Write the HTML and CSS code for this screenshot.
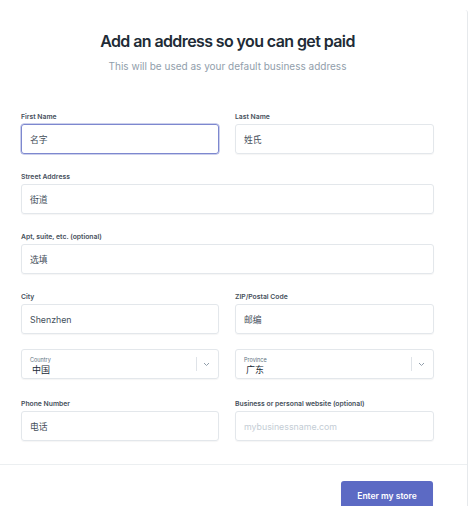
FILE: index.html
```html
<!DOCTYPE html>
<html lang="en">
<head>
<meta charset="utf-8">
<title>Add an address</title>
<link rel="stylesheet" href="styles.css">
</head>
<body>
<div class="card">
  <header class="intro">
    <h1 class="title">Add an address so you can get paid</h1>
    <p class="subtitle">This will be used as your default business address</p>
  </header>
  <form class="form">
    <div class="grid">
      <div class="field">
        <label class="label">First Name</label>
        <div class="input focused">名字</div>
      </div>
      <div class="field">
        <label class="label">Last Name</label>
        <div class="input">姓氏</div>
      </div>
      <div class="field wide">
        <label class="label">Street Address</label>
        <div class="input">街道</div>
      </div>
      <div class="field wide">
        <label class="label">Apt, suite, etc. (optional)</label>
        <div class="input">选填</div>
      </div>
      <div class="field">
        <label class="label">City</label>
        <div class="input">Shenzhen</div>
      </div>
      <div class="field">
        <label class="label">ZIP/Postal Code</label>
        <div class="input">邮编</div>
      </div>
      <div class="select">
        <div class="select-text">
          <span class="select-label">Country</span>
          <span class="select-value">中国</span>
        </div>
        <span class="select-sep"></span>
        <svg class="chev" width="7" height="5" viewBox="0 0 7 5"><path d="M1 1l2.5 2.5L6 1" fill="none" stroke="#919eab" stroke-width="1"/></svg>
      </div>
      <div class="select">
        <div class="select-text">
          <span class="select-label">Province</span>
          <span class="select-value">广东</span>
        </div>
        <span class="select-sep"></span>
        <svg class="chev" width="7" height="5" viewBox="0 0 7 5"><path d="M1 1l2.5 2.5L6 1" fill="none" stroke="#919eab" stroke-width="1"/></svg>
      </div>
      <div class="field">
        <label class="label">Phone Number</label>
        <div class="input">电话</div>
      </div>
      <div class="field">
        <label class="label">Business or personal website (optional)</label>
        <div class="input placeholder">mybusinessname.com</div>
      </div>
    </div>
  </form>
  <footer class="footer">
    <button class="button" type="button">Enter my store</button>
  </footer>
</div>
</body>
</html>
```
FILE: styles.css
```css
* { box-sizing: border-box; }
html, body { margin: 0; padding: 0; background: #fff; }
body {
  font-family: Inter, "Noto Sans CJK SC", sans-serif;
  color: #212b36;
  overflow: hidden;
  height: 506px;
}
.card {
  width: 468px;
  margin-top: 10px;
  border-right: 1px solid #e6e9ec;
  border-top-right-radius: 3px;
  min-height: 496px;
}
.intro {
  width: 413px;
  margin-left: 21px;
  text-align: center;
  padding-top: 19px;
}
.title {
  margin: 0;
  font-size: 16px;
  line-height: 24px;
  font-weight: 600;
  letter-spacing: -0.6px;
  color: #212b36;
}
.subtitle {
  margin: 6px 0 0;
  font-size: 10px;
  line-height: 14px;
  color: #919eab;
}
.form {
  padding: 38px 34px 23px 21px;
}
.grid {
  display: grid;
  grid-template-columns: 198px 199px;
  column-gap: 16px;
  row-gap: 17px;
}
.field { display: flex; flex-direction: column; }
.wide { grid-column: 1 / span 2; }
.label {
  font-size: 6.8px;
  line-height: 11px;
  font-weight: 600;
  color: #454f5b;
  margin-bottom: 2px;
}
.input {
  height: 30px;
  border: 1px solid #e3e7eb;
  border-radius: 3px;
  box-shadow: 0 1px 1px rgba(0,0,0,0.04);
  padding: 0 8px;
  display: flex;
  align-items: center;
  font-size: 8.8px;
  color: #454f5b;
}
.focused {
  border-color: #7d88cf;
  box-shadow: 0 0 0 0.5px #9aa2da;
}
.placeholder { color: #c4cdd5; }
.select {
  height: 30px;
  margin-top: -2px;
  margin-bottom: 2px;
  border: 1px solid #e3e7eb;
  border-radius: 3px;
  box-shadow: 0 1px 1px rgba(0,0,0,0.04);
  display: flex;
  align-items: center;
  padding: 0 8px 0 8px;
}
.select-text {
  flex: 1;
  display: flex;
  flex-direction: column;
  padding-top: 3px;
}
.select-label {
  font-size: 5.5px;
  line-height: 7px;
  color: #637381;
}
.select-value {
  font-size: 9px;
  line-height: 11px;
  color: #212b36;
  padding-left: 2px;
}
.select-sep {
  width: 1px;
  height: 14px;
  background: #dfe3e8;
  margin-right: 6px;
}
.chev { display: block; }
.footer {
  border-top: 1px solid #eceff1;
  padding: 16px 34px 0 0;
  display: flex;
  justify-content: flex-end;
}
.button {
  width: 92px;
  height: 30px;
  border: none;
  border-radius: 3px;
  background: #5c6ac4;
  color: #fff;
  font-family: Inter, sans-serif;
  font-size: 8.5px;
  font-weight: 600;
  box-shadow: 0 1px 1px rgba(0,0,0,0.1);
}
```
